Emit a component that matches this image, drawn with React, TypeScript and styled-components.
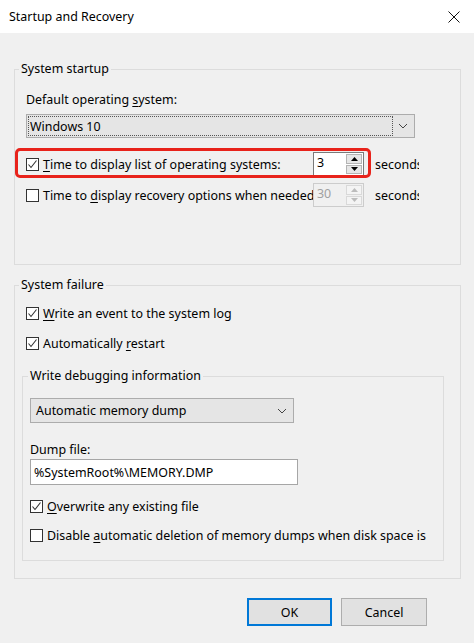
import React from 'react';
import styled, { createGlobalStyle } from 'styled-components';

const GlobalStyle = createGlobalStyle`
  html, body {
    margin: 0;
    padding: 0;
    background: #f0f0f0;
  }
  body {
    font-family: "Noto Sans", "Open Sans", sans-serif;
    font-size: 12.45px;
    color: #000;
  }
  * { box-sizing: border-box; }
`;

const Window = styled.div`
  width: 474px;
  height: 643px;
  display: flex;
  flex-direction: column;
  background: #f0f0f0;
  overflow: hidden;
`;

const TitleBar = styled.div`
  height: 33px;
  flex: none;
  background: #fff;
  display: flex;
  align-items: center;
  justify-content: space-between;
  padding: 0 14px 0 9px;
`;

const Body = styled.div`
  padding: 28px 13px 0 14px;
  display: flex;
  flex-direction: column;
`;

const GroupBox = styled.fieldset<{ $mt?: number; $ml?: number; $width?: number }>`
  margin: ${p => p.$mt ?? 0}px 0 0 ${p => p.$ml ?? 0}px;
  padding: 0;
  border: 1px solid #dcdcdc;
  min-width: 0;
  width: ${p => (p.$width ? `${p.$width}px` : 'auto')};
`;

const Legend = styled.legend<{ $ml: number }>`
  margin-left: ${p => p.$ml}px;
  padding: 0 2px;
  line-height: 16px;
`;

const GroupContent = styled.div<{ $pad: string }>`
  padding: ${p => p.$pad};
  display: flex;
  flex-direction: column;
`;

const Label = styled.div<{ $mt?: number }>`
  line-height: 16px;
  margin-top: ${p => p.$mt ?? 0}px;
  white-space: nowrap;
`;

const Key = styled.u`
  text-decoration-thickness: 1px;
  text-underline-offset: 2px;
`;

const ComboBox = styled.div<{ $width: number; $height: number; $mt?: number }>`
  width: ${p => p.$width}px;
  height: ${p => p.$height}px;
  margin-top: ${p => p.$mt ?? 0}px;
  background: #e5e5e5;
  border: 1px solid #acacac;
  display: flex;
  align-items: center;
  padding: 1px;
`;

const ComboText = styled.div<{ $focused?: boolean }>`
  flex: 1;
  height: 100%;
  display: flex;
  align-items: center;
  padding-left: ${p => (p.$focused ? 1 : 3)}px;
  border: 1px dotted ${p => (p.$focused ? '#555' : 'transparent')};
  white-space: nowrap;
`;

const ComboArrow = styled.div`
  width: 20px;
  height: 100%;
  display: flex;
  align-items: center;
  justify-content: center;
`;

const OptionRow = styled.div<{ $mt?: number }>`
  position: relative;
  display: flex;
  align-items: center;
  height: 24px;
  margin-top: ${p => p.$mt ?? 0}px;
`;

const Highlight = styled.div`
  position: absolute;
  left: -11px;
  top: -4px;
  width: 356px;
  height: 30px;
  border: 3px solid #e8231b;
  border-radius: 5px;
  pointer-events: none;
`;

const CheckLabel = styled.label<{ $width?: number; $mt?: number }>`
  display: flex;
  align-items: center;
  gap: 4px;
  height: 16px;
  width: ${p => (p.$width ? `${p.$width}px` : 'auto')};
  margin-top: ${p => p.$mt ?? 0}px;
  overflow: hidden;
  white-space: nowrap;
  flex: none;
`;

const Box = styled.span`
  width: 13px;
  height: 13px;
  flex: none;
  border: 1px solid #333;
  background: #fff;
  display: flex;
  align-items: center;
  justify-content: center;
`;

const Spin = styled.div<{ $disabled?: boolean }>`
  width: 51px;
  height: 24px;
  flex: none;
  display: flex;
  border: 1px solid ${p => (p.$disabled ? '#cccccc' : '#7a7a7a')};
  background: ${p => (p.$disabled ? '#f0f0f0' : '#fff')};
  color: ${p => (p.$disabled ? '#a0a0a0' : '#000')};
`;

const SpinValue = styled.div`
  flex: 1;
  padding: 2px 0 0 3px;
  line-height: 16px;
`;

const SpinButtons = styled.div`
  width: 17px;
  display: flex;
  flex-direction: column;
  gap: 1px;
  padding: 1px 1px 1px 0;
`;

const SpinButton = styled.div<{ $disabled?: boolean }>`
  flex: 1;
  background: ${p => (p.$disabled ? '#f4f4f4' : '#e6e6e6')};
  border: 1px solid ${p => (p.$disabled ? '#d9d9d9' : '#b4b4b4')};
  display: flex;
  align-items: center;
  justify-content: center;
`;

const Seconds = styled.div`
  margin-left: 11px;
  width: 44px;
  overflow: hidden;
  white-space: nowrap;
`;

const TextBox = styled.div<{ $mt?: number }>`
  width: 268px;
  height: 26px;
  margin-top: ${p => p.$mt ?? 0}px;
  background: #fff;
  border: 1px solid #a6a6a6;
  display: flex;
  align-items: center;
  padding-left: 3px;
  white-space: nowrap;
`;

const ButtonBar = styled.div`
  display: flex;
  justify-content: flex-end;
  gap: 9px;
  margin-top: 19px;
  padding-right: 34px;
`;

const Button = styled.div<{ $default?: boolean }>`
  width: ${p => (p.$default ? 85 : 86)}px;
  height: 28px;
  display: flex;
  align-items: center;
  justify-content: center;
  background: #e1e1e1;
  border: ${p => (p.$default ? '2px solid #0078d7' : '1px solid #adadad')};
`;

const Check = ({ checked }: { checked?: boolean }) => (
  <Box>
    {checked && (
      <svg width="11" height="11" viewBox="0 0 11 11">
        <polyline points="1.5,5.5 4,8.5 9.5,1.5" fill="none" stroke="#333" strokeWidth="1.1" />
      </svg>
    )}
  </Box>
);

const Chevron = () => (
  <svg width="10" height="6" viewBox="0 0 10 6">
    <polyline points="1,1 5,5 9,1" fill="none" stroke="#444" strokeWidth="1" />
  </svg>
);

const Arrow = ({ up, color }: { up?: boolean; color: string }) => (
  <svg width="7" height="4" viewBox="0 0 7 4">
    <polygon points={up ? '0,4 3.5,0 7,4' : '0,0 7,0 3.5,4'} fill={color} />
  </svg>
);

const SpinBox = ({ value, disabled }: { value: string; disabled?: boolean }) => {
  const c = disabled ? '#bcbcbc' : '#000';
  return (
    <Spin $disabled={disabled}>
      <SpinValue>{value}</SpinValue>
      <SpinButtons>
        <SpinButton $disabled={disabled}><Arrow up color={c} /></SpinButton>
        <SpinButton $disabled={disabled}><Arrow color={c} /></SpinButton>
      </SpinButtons>
    </Spin>
  );
};

const App = () => {
  return (
    <Window>
      <GlobalStyle />
      <TitleBar>
        <span>Startup and Recovery</span>
        <svg width="12" height="12" viewBox="0 0 12 12">
          <path d="M0.5 0.5 L11.5 11.5 M11.5 0.5 L0.5 11.5" stroke="#111" strokeWidth="1" />
        </svg>
      </TitleBar>
      <Body>
        <GroupBox>
          <Legend $ml={4}>System startup</Legend>
          <GroupContent $pad="15px 0 57px 11px">
            <Label>Default operating <Key>s</Key>ystem:</Label>
            <ComboBox $width={389} $height={24} $mt={6}>
              <ComboText $focused>Windows 10</ComboText>
              <ComboArrow><Chevron /></ComboArrow>
            </ComboBox>
            <OptionRow $mt={14}>
              <CheckLabel $width={287}>
                <Check checked />
                <span><Key>T</Key>ime to display list of operating systems:</span>
              </CheckLabel>
              <SpinBox value="3" />
              <Seconds>seconds</Seconds>
              <Highlight />
            </OptionRow>
            <OptionRow $mt={7}>
              <CheckLabel $width={287}>
                <Check />
                <span>Time to <Key>d</Key>isplay recovery options when needed:</span>
              </CheckLabel>
              <SpinBox value="30" disabled />
              <Seconds>seconds</Seconds>
            </OptionRow>
          </GroupContent>
        </GroupBox>

        <GroupBox $mt={12}>
          <Legend $ml={4}>System failure</Legend>
          <GroupContent $pad="12px 0 17px 11px">
            <CheckLabel>
              <Check checked />
              <span><Key>W</Key>rite an event to the system log</span>
            </CheckLabel>
            <CheckLabel $mt={14}>
              <Check checked />
              <span>Automatically <Key>r</Key>estart</span>
            </CheckLabel>
            <GroupBox $mt={17} $ml={-4} $width={422}>
              <Legend $ml={5}>Write debugging information</Legend>
              <GroupContent $pad="14px 0 17px 7px">
                <ComboBox $width={264} $height={25}>
                  <ComboText>Automatic memory dump</ComboText>
                  <ComboArrow><Chevron /></ComboArrow>
                </ComboBox>
                <Label $mt={19}>Dump file:</Label>
                <TextBox $mt={1}>%SystemRoot%\MEMORY.DMP</TextBox>
                <CheckLabel $mt={13}>
                  <Check checked />
                  <span><Key>O</Key>verwrite any existing file</span>
                </CheckLabel>
                <CheckLabel $mt={13} $width={399}>
                  <Check />
                  <span>Disable <Key>a</Key>utomatic deletion of memory dumps when disk space is low</span>
                </CheckLabel>
              </GroupContent>
            </GroupBox>
          </GroupContent>
        </GroupBox>

        <ButtonBar>
          <Button $default>OK</Button>
          <Button>Cancel</Button>
        </ButtonBar>
      </Body>
    </Window>
  );
};

export default App;
